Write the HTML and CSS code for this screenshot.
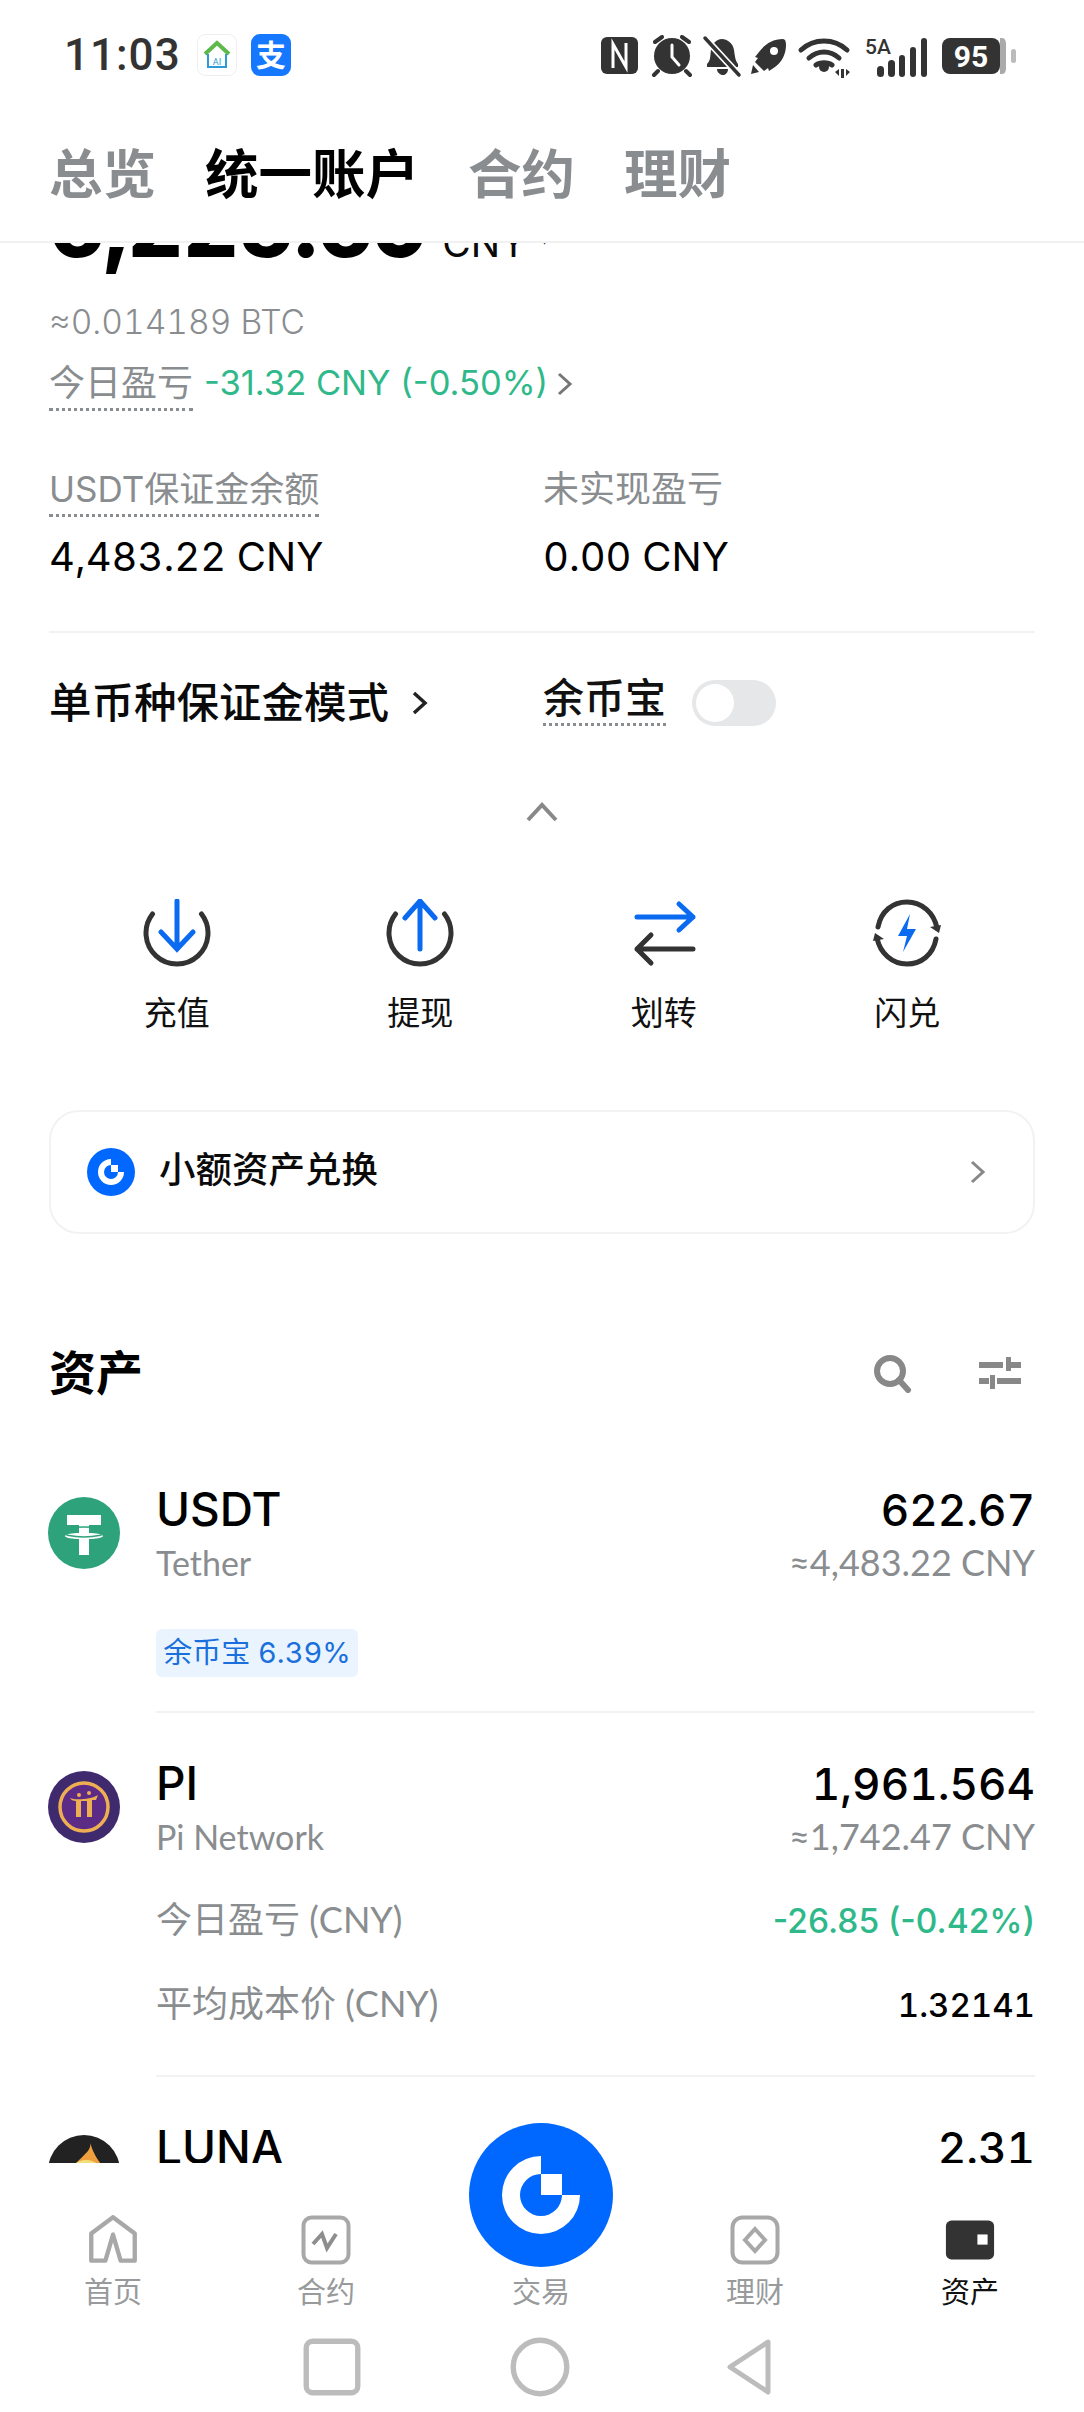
FILE: index.html
```html
<!DOCTYPE html>
<html lang="zh">
<head>
<meta charset="utf-8">
<title>统一账户</title>
<link rel="stylesheet" href="styles.css">
</head>
<body>
<div class="app">
  <header class="top">
    <div class="status">
      <span class="time">11:03</span>
      <svg class="app-ic" viewBox="0 0 40 42"><rect x=".5" y=".5" width="39" height="41" rx="8" fill="#fff" stroke="#eee"/><path d="M8 20 20 9l12 11" fill="none" stroke="#5fb84a" stroke-width="4"/><path d="M11 20v13h18V20" fill="none" stroke="#2d9bd8" stroke-width="2"/><text x="20" y="31" font-size="9" text-anchor="middle" fill="#2d9bd8" font-family="Roboto">AI</text></svg>
      <span class="alipay">支</span>
      <svg class="sys-ic" viewBox="0 0 416 50">
        <g fill="#333">
          <rect x="0" y="2" width="37" height="37" rx="6"/>
          <circle cx="71" cy="21" r="18"/>
          <path d="M54 7l7-5M88 7l-7-5M57 36l-4 4M85 36l4 4" stroke="#333" stroke-width="4" stroke-linecap="round"/>
          <path d="M106 29c4-4 3-8 4-14 1-7 6-11 11-11s11 4 12 11c1 6 1 10 4 14v3h-31z"/>
          <path d="M116 34h11c0 4-3 6-5 6s-6-2-6-6z"/>
          <path d="M182 4c-11 0-19 6-24 13l-4 5 3 1-3 4 9 9 4-3 1 3 6-4c7-5 11-13 11-22 0-4-1-6-3-6zM152 30l-2 9 8-2z"/>
          <circle cx="223" cy="32" r="5"/>
          <rect x="240" y="34" width="3" height="9"/>
          <path d="M234 37l4-3v7zM245 34l4 3-4 4z"/>
          <rect x="276" y="31" width="7" height="11" rx="3.5"/><rect x="287" y="25" width="7" height="17" rx="3.5"/><rect x="298" y="20" width="6" height="22" rx="3"/><rect x="309" y="12" width="6" height="30" rx="3"/><rect x="320" y="3" width="6" height="39" rx="3"/>
          <rect x="341" y="3" width="58" height="36" rx="8"/>
        </g>
        <path d="M12 33V9l13 23V8" fill="none" stroke="#fff" stroke-width="3"/>
        <path d="M71 10v12l7 8" fill="none" stroke="#fff" stroke-width="3" stroke-linecap="round"/>
        <path d="M104 3l34 37" stroke="#fff" stroke-width="7"/><path d="M104 3l34 37" stroke="#333" stroke-width="3.5" stroke-linecap="round"/>
        <circle cx="173" cy="16" r="4" fill="#fff"/>
        <path d="M200 15c13-12 33-12 46 0M208 23c9-8 21-8 30 0M215 30c4-3 12-3 16 0" fill="none" stroke="#333" stroke-width="5" stroke-linecap="round"/>
        <path d="M399 3h2c3 0 4 3 4 6v24c0 3-1 6-4 6h-2z" fill="#aaa"/>
        <rect x="410" y="14" width="5" height="14" rx="2.5" fill="#bbb"/>
        <text class="sig-text" x="264" y="19">5A</text>
        <text class="bat-text" x="370" y="32">95</text>
      </svg>
    </div>
    <nav class="tabs">
      <span class="tab">总览</span>
      <span class="tab is-on">统一账户</span>
      <span class="tab">合约</span>
      <span class="tab">理财</span>
    </nav>
  </header>

  <main class="view">
    <div class="scroll">
      <div class="balance"><span class="bal-num">6,225.69</span><span class="bal-unit">CNY</span><span class="bal-caret">▾</span></div>
      <div class="btc">≈0.014189 BTC</div>
      <div class="pnl">
        <span class="dotted">今日盈亏</span>
        <span class="green">-31.32 CNY (-0.50%)</span>
        <svg class="chev-s" viewBox="0 0 18 26"><path d="M3 3l11 10L3 23" fill="none" stroke="#777" stroke-width="3"/></svg>
      </div>
      <div class="stats">
        <div>
          <span class="dotted">USDT保证金余额</span>
          <div class="stat-val">4,483.22 CNY</div>
        </div>
        <div>
          <span class="dotted no-line">未实现盈亏</span>
          <div class="stat-val">0.00 CNY</div>
        </div>
      </div>
      <div class="rule top-rule"></div>
      <div class="modes">
        <div class="mode-left">单币种保证金模式<svg class="chev-m" viewBox="0 0 18 26"><path d="M3 3l11 10L3 23" fill="none" stroke="#222" stroke-width="3.5"/></svg></div>
        <div class="mode-right">
          <span class="dotted dark">余币宝</span>
          <span class="toggle"><span class="knob"></span></span>
        </div>
      </div>
      <div class="collapse"><svg class="chev-up" viewBox="0 0 34 22"><path d="M3 19 17 4l14 15" fill="none" stroke="#888" stroke-width="4"/></svg></div>
      <div class="actions">
        <div class="action">
          <svg viewBox="0 0 68 68"><path d="M9.500 15A31 31 0 1 0 58.500 15" fill="none" stroke="#333" stroke-width="5" stroke-linecap="round"/><path d="M34 2v47M18 33l16 17 16-17" fill="none" stroke="#0b6bf0" stroke-width="5" stroke-linecap="round"/></svg>
          <span>充值</span>
        </div>
        <div class="action">
          <svg viewBox="0 0 68 68"><path d="M9.500 15A31 31 0 1 0 58.500 15" fill="none" stroke="#333" stroke-width="5" stroke-linecap="round"/><path d="M34 50V2M19 19 34 2l15 17" fill="none" stroke="#0b6bf0" stroke-width="5" stroke-linecap="round"/></svg>
          <span>提现</span>
        </div>
        <div class="action">
          <svg viewBox="0 0 68 68"><path d="M7 18h56M49 5l14 13-14 13" fill="none" stroke="#0b6bf0" stroke-width="5" stroke-linecap="round" stroke-linejoin="round"/><path d="M63 50H7M21 36 7 50l14 14" fill="none" stroke="#333" stroke-width="5" stroke-linecap="round" stroke-linejoin="round"/></svg>
          <span>划转</span>
        </div>
        <div class="action">
          <svg viewBox="0 0 68 68"><path d="M5 28C8 12 20 3 34 3c15 0 27 11 30 26" fill="none" stroke="#333" stroke-width="5" stroke-linecap="round"/><path d="M63 40C60 56 48 65 34 65 19 65 7 54 4 39" fill="none" stroke="#333" stroke-width="5" stroke-linecap="round"/><path d="M57 28l9 6 2-8zM11 40l-9-6-2 8z" fill="#333"/><path d="M37 15 25 37h9l-4 16 13-23h-9z" fill="#0b6bf0"/></svg>
          <span>闪兑</span>
        </div>
      </div>
      <div class="card">
        <svg class="card-logo" viewBox="-72 -72 144 144"><circle r="72" fill="#0068ff"/><path d="M0-39A39 39 0 1 0 39 0H21A21 21 0 1 1 0-21Z" fill="#fff"/><rect y="-21" width="21" height="21" fill="#fff"/></svg>
        <span class="card-text">小额资产兑换</span>
        <svg class="chev-c" viewBox="0 0 18 26"><path d="M3 3l11 10L3 23" fill="none" stroke="#888" stroke-width="3"/></svg>
      </div>
      <div class="section-head">
        <h2>资产</h2>
        <div class="tools">
          <svg viewBox="0 0 40 40"><circle cx="18" cy="18" r="13" fill="none" stroke="#888" stroke-width="6"/><path d="M27 27l9 10" stroke="#888" stroke-width="6" stroke-linecap="round"/></svg>
          <svg viewBox="0 0 42 32"><g fill="#888"><rect y="5" width="24" height="6"/><rect x="28" y="5" width="14" height="6"/><rect x="27" width="5" height="14"/><rect y="21" width="10" height="6"/><rect x="18" y="21" width="24" height="6"/><rect x="11" y="18" width="5" height="14"/></g></svg>
        </div>
      </div>

      <section class="asset first">
        <svg class="coin" viewBox="0 0 72 72"><circle cx="36" cy="36" r="36" fill="#2ea37b"/><path d="M19 18h34v10H41v8c6 0 14 1 14 3s-8 3-14 3v16H31V42c-6 0-14-1-14-3s8-3 14-3v-8H19z" fill="#fff"/><ellipse cx="36" cy="35" rx="21" ry="5" fill="none" stroke="#2ea37b" stroke-width="1.500"/></svg>
        <div class="body">
          <div class="line name"><span>USDT</span><span class="num">622.67</span></div>
          <div class="line sub"><span>Tether</span><span class="approx">≈4,483.22 CNY</span></div>
          <div class="badge">余币宝 6.39%</div>
          <div class="rule after-badge"></div>
        </div>
      </section>

      <section class="asset">
        <svg class="coin" viewBox="0 0 72 72"><circle cx="36" cy="36" r="36" fill="#3f2a6e"/><circle cx="36" cy="36" r="24" fill="#5b2b86" stroke="#eeaf52" stroke-width="3.500"/><path d="M22 27c4 2 20 2 28-3l-2 5H44v17h-5V30h-6v16h-5V30c-3 0-5-1-6-3z" fill="#eeaf52"/><circle cx="31" cy="24" r="2" fill="#eeaf52"/><circle cx="41" cy="22" r="2" fill="#eeaf52"/></svg>
        <div class="body">
          <div class="line name"><span>PI</span><span class="num">1,961.564</span></div>
          <div class="line sub"><span>Pi Network</span><span class="approx">≈1,742.47 CNY</span></div>
          <div class="line detail"><span class="label">今日盈亏 (CNY)</span><span class="green strong">-26.85 (-0.42%)</span></div>
          <div class="line detail second"><span class="label">平均成本价 (CNY)</span><span class="cost">1.32141</span></div>
          <div class="rule after-detail"></div>
        </div>
      </section>

      <section class="asset">
        <svg class="coin" viewBox="0 0 72 72"><circle cx="36" cy="36" r="36" fill="#222"/><path d="M42 6c4 14-20 18-24 42 4 18 30 22 42 6 4-20-14-26-18-48z" fill="#ef9f3d"/><circle cx="38" cy="44" r="19" fill="#f3df79"/></svg>
        <div class="body">
          <div class="line name"><span>LUNA</span><span class="num">2.31</span></div>
        </div>
      </section>
    </div>
  </main>

  <footer class="bottom">
    <nav class="nav">
      <div class="nav-item">
        <svg viewBox="0 0 46 46"><path d="M3 42V17L23 2l20 15v25H30l-7-24-7 24z" fill="none" stroke="#a8a8a8" stroke-width="4" stroke-linejoin="round"/></svg>
        <span>首页</span>
      </div>
      <div class="nav-item">
        <svg viewBox="0 0 50 50"><rect x="2.500" y="2.500" width="45" height="45" rx="8" fill="none" stroke="#a8a8a8" stroke-width="4"/><path d="M12 29l9-10 5 14 9-14" fill="none" stroke="#8e8e8e" stroke-width="4"/></svg>
        <span>合约</span>
      </div>
      <div class="nav-item nav-trade"><span>交易</span></div>
      <div class="nav-item">
        <svg viewBox="0 0 50 50"><rect x="2.500" y="2.500" width="45" height="45" rx="10" fill="none" stroke="#a8a8a8" stroke-width="4"/><path d="M25 14l10 11-10 11-10-11z" fill="none" stroke="#a8a8a8" stroke-width="4"/></svg>
        <span>理财</span>
      </div>
      <div class="nav-item on">
        <svg viewBox="0 0 54 46"><rect x="1" y="2" width="52" height="42" rx="6" fill="#333"/><rect x="35" y="17" width="11" height="11" fill="#fff"/></svg>
        <span>资产</span>
      </div>
    </nav>
    <div class="sysnav">
      <svg viewBox="0 0 54 54"><rect x="3" y="3" width="48" height="48" rx="6" fill="none" stroke="#bcbcbc" stroke-width="5"/></svg>
      <svg viewBox="0 0 56 56"><circle cx="28" cy="28" r="25" fill="none" stroke="#bcbcbc" stroke-width="5"/></svg>
      <svg viewBox="0 0 50 58"><path d="M44 4 6 29l38 25z" fill="none" stroke="#bcbcbc" stroke-width="5" stroke-linejoin="round"/></svg>
    </div>
    <svg class="trade-btn" viewBox="-72 -72 144 144"><circle r="72" fill="#0068ff"/><path d="M0-39A39 39 0 1 0 39 0H21A21 21 0 1 1 0-21Z" fill="#fff"/><rect y="-21" width="21" height="21" fill="#fff"/></svg>
  </footer>
</div>
</body>
</html>
```
FILE: styles.css
```css
* { box-sizing: border-box; }
html, body { margin: 0; padding: 0; background: #fff; }
body {
  font-family: Inter, "Noto Sans CJK SC", sans-serif;
  font-variant-numeric: tabular-nums;
  color: #0a0a0a;
  width: 1084px;
  height: 2412px;
  overflow: hidden;
}
.app { display: flex; flex-direction: column; height: 2412px; }

.top { height: 243px; flex: none; border-bottom: 2px solid #f1f1f1; }
.status { display: flex; align-items: center; height: 110px; padding-left: 64px; }
.time { font-family: Roboto, sans-serif; font-size: 44px; font-weight: 500; color: #333; letter-spacing: 1px; width: 133px; }
.app-ic { width: 40px; height: 42px; }
.alipay {
  width: 40px; height: 42px; margin-left: 14px; border-radius: 9px; background: #1677ff; color: #fff;
  font-size: 30px; font-weight: 700; line-height: 42px; text-align: center;
}
.sys-ic { width: 416px; height: 50px; margin: 10px 0 0 310px; }
.sig-text { font: 500 21px Roboto, sans-serif; fill: #333; }
.bat-text { font: 700 30px Roboto, sans-serif; fill: #fff; text-anchor: middle; }

.tabs { display: flex; gap: 49px; padding: 30px 0 0 49px; }
.tab { font-size: 53.500px; line-height: 70px; font-weight: 700; color: #8a8d8f; }
.tab.is-on { color: #000; }

.view { flex: 1; overflow: hidden; min-height: 0; }
.scroll { padding: 0 49px; margin-top: -52px; }

.balance { display: flex; align-items: baseline; height: 106px; line-height: 70px; }
.bal-num { font-size: 86px; font-weight: 800; color: #000; }
.bal-unit { font-size: 39px; margin-left: 14px; }
.bal-caret { font-size: 14px; margin-left: 14px; color: #333; position: relative; top: -12px; }

.btc { font-size: 33.500px; line-height: 50px; color: #8a8d8f; font-weight: 300; }
.pnl { display: flex; align-items: flex-start; margin-top: 11px; }
.dotted {
  display: inline-block; font-size: 36px; line-height: 50px; color: #8a8d8f;
  border-bottom: 3px dotted #8a8d8f;
}
.stats .dotted { font-size: 35px; }
.stats .dotted.no-line { font-size: 36px; }
.dotted.no-line { border-bottom-color: transparent; }
.dotted.dark { color: #111; font-size: 41px; font-weight: 500; line-height: 50px; }
.green { color: #2fb98a; }
.pnl .green { font-size: 34.500px; line-height: 50px; margin-left: 11px; font-weight: 400; font-variant-numeric: proportional-nums; }
.chev-s { width: 18px; height: 26px; margin: 13px 0 0 8px; }

.stats { display: grid; grid-template-columns: 494px 1fr; margin-top: 53px; }
.stat-val { font-size: 40px; line-height: 50px; margin-top: 15px; font-weight: 400; color: #000; }

.rule { height: 2px; background: #f2f2f2; margin-top: 50px; }
.rule.top-rule { margin-top: 49px; }

.modes { display: grid; grid-template-columns: 494px 1fr; margin-top: 40px; height: 55px; }
.mode-left { display: flex; align-items: center; padding-top: 5px; font-size: 42.500px; font-weight: 500; line-height: 50px; white-space: nowrap; }
.chev-m { width: 18px; height: 26px; margin-left: 22px; }
.mode-right { display: flex; align-items: flex-start; }
.toggle { width: 84px; height: 46px; margin: 7px 0 0 26px; border-radius: 23px; background: #e6e7e8; padding: 4px; }
.knob { display: block; width: 38px; height: 38px; border-radius: 50%; background: #fff; }

.collapse { display: flex; justify-content: center; margin-top: 64px; height: 40px; align-items: center; }
.chev-up { width: 34px; height: 22px; }

.actions { display: grid; grid-template-columns: repeat(4, 243.500px); margin: 67px 0 0 6px; }
.action { display: flex; flex-direction: column; align-items: center; }
.action svg { width: 68px; height: 68px; }
.action span { font-size: 33px; line-height: 50px; margin-top: 21px; color: #111; }

.card {
  display: flex; align-items: center; height: 124px; margin-top: 72px; padding: 0 46px 0 36px;
  border: 2px solid #f2f2f2; border-radius: 30px;
}
.card-logo { width: 48px; height: 48px; }
.card-text { font-size: 36.500px; line-height: 50px; font-weight: 500; margin: -4px 0 0 24px; flex: 1; }
.chev-c { width: 18px; height: 26px; }

.section-head { display: flex; justify-content: space-between; align-items: center; height: 70px; margin-top: 104px; }
.section-head h2 { margin: 0; font-size: 47px; font-weight: 700; line-height: 70px; color: #000; }
.tools { display: flex; align-items: center; gap: 67px; padding-right: 14px; }
.tools svg:first-child { width: 40px; height: 40px; }
.tools svg:last-child { width: 42px; height: 32px; }

.asset { display: flex; padding-top: 42px; }
.asset.first { padding-top: 73px; }
.coin { width: 72px; height: 72px; margin: 16px 0 0 -1px; flex: none; }
.body { flex: 1; margin-left: 36px; min-width: 0; }
.line { display: flex; justify-content: space-between; align-items: baseline; }
.name { font-size: 46px; line-height: 56px; font-weight: 500; color: #000; }
.num { font-size: 44px; }
.sub { font-size: 34px; line-height: 48px; color: #8a8d8f; font-family: Lato, "Noto Sans CJK SC", sans-serif; }
.approx { font-size: 36px; }
.badge {
  width: 202px; height: 48px; margin-top: 42px; border-radius: 6px; background: #e9f4ff; color: #1a6fdc;
  font-size: 29px; line-height: 48px; text-align: center; white-space: nowrap;
}
.rule.after-badge { margin-top: 34px; }
.detail { font-size: 36px; line-height: 50px; margin-top: 33px; }
.detail.second { margin-top: 32px; }
.label { color: #8a8d8f; font-family: Lato, "Noto Sans CJK SC", sans-serif; }
.green.strong { font-size: 33.500px; font-weight: 500; font-variant-numeric: proportional-nums; }
.cost { font-size: 33px; font-weight: 500; color: #000; }
.rule.after-detail { margin-top: 45px; }

.bottom { position: relative; height: 249px; flex: none; background: #fff; }
.nav { display: grid; grid-template-columns: 113px 213px 215px 214px 215px; padding-top: 46px; height: 152px; justify-content: start; }
.nav-item { display: flex; flex-direction: column; align-items: center; justify-content: flex-end; justify-self: end; width: 100px; margin-right: -50px; height: 105px; }
.nav-item svg { width: 50px; height: 50px; margin-bottom: 7px; }
.nav-item span { font-size: 29px; line-height: 42px; color: #989a9c; }
.nav-item.on span { color: #111; }
.sysnav { display: flex; align-items: center; gap: 0; height: 97px; padding: 6px 0 0 303px; }
.sysnav svg { flex: none; }
.sysnav svg:nth-child(1) { width: 58px; height: 58px; }
.sysnav svg:nth-child(2) { width: 60px; height: 60px; margin-left: 149px; }
.sysnav svg:nth-child(3) { width: 50px; height: 58px; margin-left: 154px; }
.trade-btn { position: absolute; left: 469px; top: -40px; width: 144px; height: 144px; }
```
